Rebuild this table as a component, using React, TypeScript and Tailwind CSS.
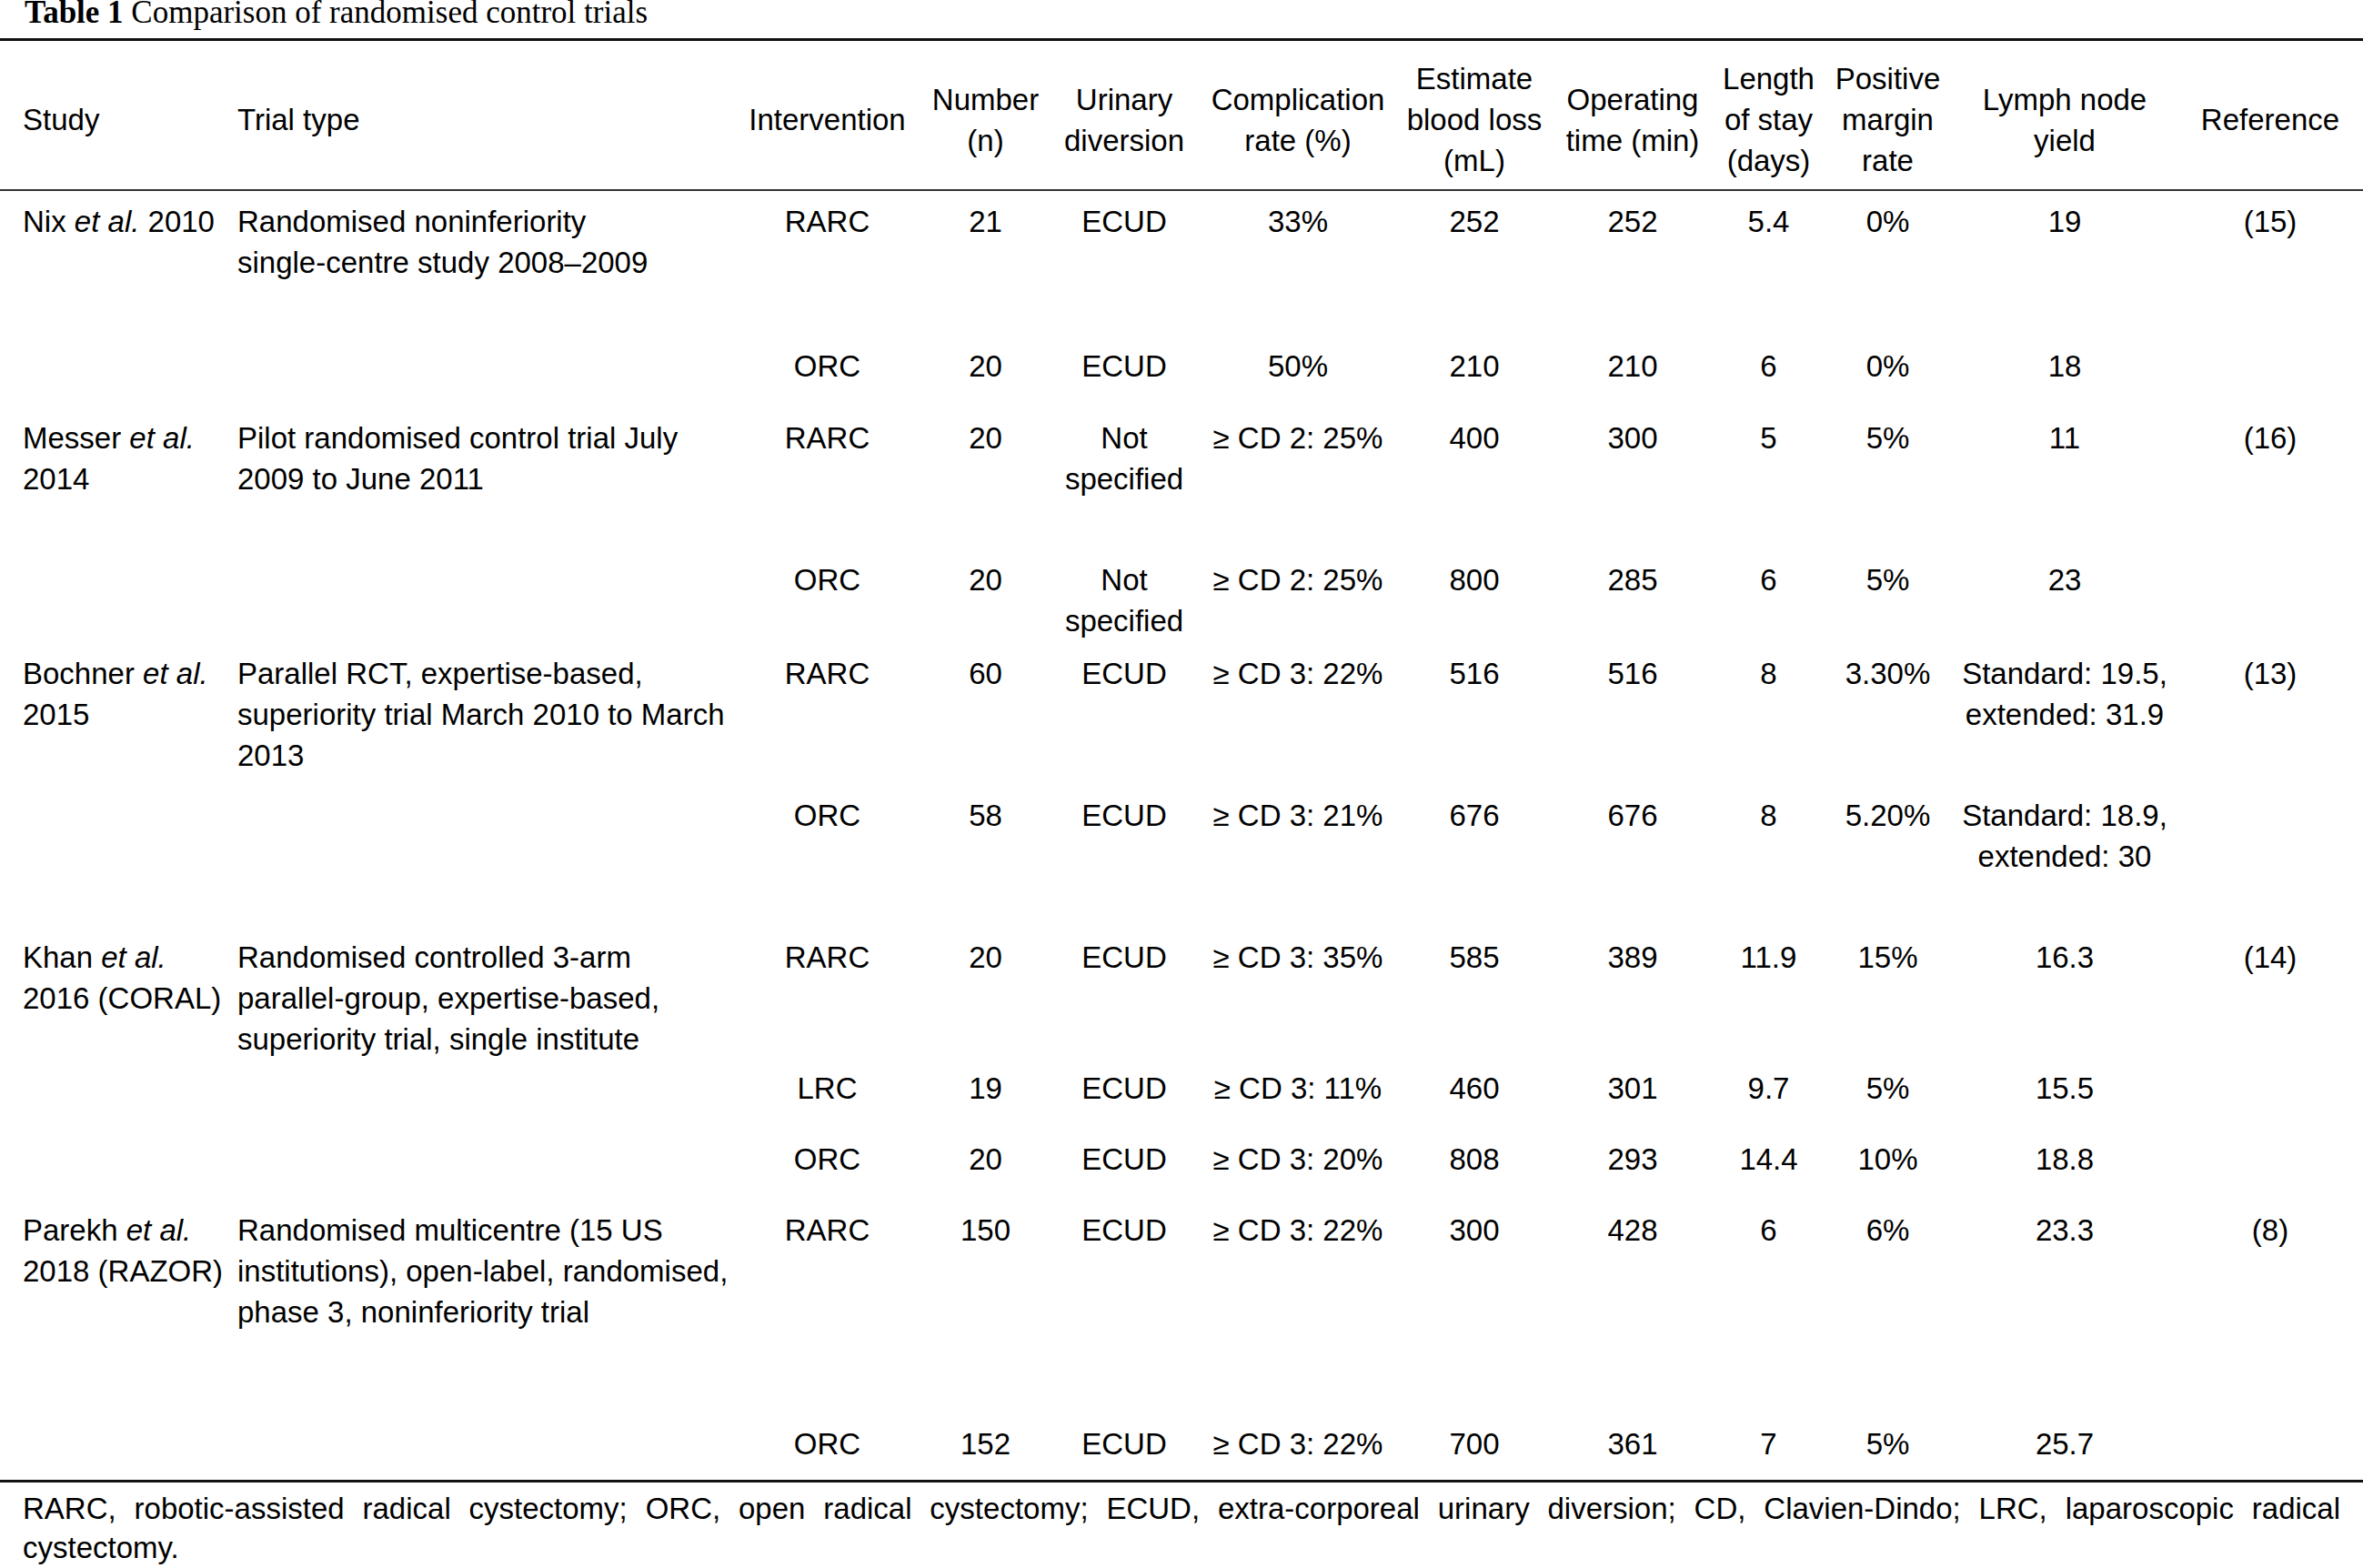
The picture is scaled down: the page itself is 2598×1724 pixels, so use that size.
import React from "react";

type Row = {
  h: string;
  cells: React.ReactNode[];
};

const COLS =
  "grid grid-cols-[259px_547px_207px_141px_164px_218px_170px_178px_121px_141px_248px_204px]";

const EA = <i>et al.</i>;

const rows: Row[] = [
  {
    h: "h-[159px]",
    cells: [
      <>Nix {EA} 2010</>,
      <>Randomised noninferiority<br />single-centre study 2008–2009</>,
      "RARC", "21", "ECUD", "33%", "252", "252", "5.4", "0%", "19", "(15)",
    ],
  },
  {
    h: "h-[79px]",
    cells: ["", "", "ORC", "20", "ECUD", "50%", "210", "210", "6", "0%", "18", ""],
  },
  {
    h: "h-[156px]",
    cells: [
      <>Messer {EA}<br />2014</>,
      <>Pilot randomised control trial July<br />2009 to June 2011</>,
      "RARC", "20", <>Not<br />specified</>, "≥ CD 2: 25%", "400", "300", "5", "5%", "11", "(16)",
    ],
  },
  {
    h: "h-[103px]",
    cells: ["", "", "ORC", "20", <>Not<br />specified</>, "≥ CD 2: 25%", "800", "285", "6", "5%", "23", ""],
  },
  {
    h: "h-[156px]",
    cells: [
      <>Bochner {EA}<br />2015</>,
      <>Parallel RCT, expertise-based,<br />superiority trial March 2010 to March<br />2013</>,
      "RARC", "60", "ECUD", "≥ CD 3: 22%", "516", "516", "8", "3.30%",
      <>Standard: 19.5,<br />extended: 31.9</>, "(13)",
    ],
  },
  {
    h: "h-[156px]",
    cells: [
      "", "", "ORC", "58", "ECUD", "≥ CD 3: 21%", "676", "676", "8", "5.20%",
      <>Standard: 18.9,<br />extended: 30</>, "",
    ],
  },
  {
    h: "h-[144px]",
    cells: [
      <>Khan {EA}<br />2016 (CORAL)</>,
      <>Randomised controlled 3-arm<br />parallel-group, expertise-based,<br />superiority trial, single institute</>,
      "RARC", "20", "ECUD", "≥ CD 3: 35%", "585", "389", "11.9", "15%", "16.3", "(14)",
    ],
  },
  {
    h: "h-[78px]",
    cells: ["", "", "LRC", "19", "ECUD", "≥ CD 3: 11%", "460", "301", "9.7", "5%", "15.5", ""],
  },
  {
    h: "h-[78px]",
    cells: ["", "", "ORC", "20", "ECUD", "≥ CD 3: 20%", "808", "293", "14.4", "10%", "18.8", ""],
  },
  {
    h: "h-[235px]",
    cells: [
      <>Parekh {EA}<br />2018 (RAZOR)</>,
      <>Randomised multicentre (15 US<br />institutions), open-label, randomised,<br />phase 3, noninferiority trial</>,
      "RARC", "150", "ECUD", "≥ CD 3: 22%", "300", "428", "6", "6%", "23.3", "(8)",
    ],
  },
  {
    h: "h-[73px]",
    cells: ["", "", "ORC", "152", "ECUD", "≥ CD 3: 22%", "700", "361", "7", "5%", "25.7", ""],
  },
];

const headers: React.ReactNode[] = [
  "Study",
  "Trial type",
  "Intervention",
  <>Number<br />(n)</>,
  <>Urinary<br />diversion</>,
  <>Complication<br />rate (%)</>,
  <>Estimate<br />blood loss<br />(mL)</>,
  <>Operating<br />time (min)</>,
  <>Length<br />of stay<br />(days)</>,
  <>Positive<br />margin<br />rate</>,
  <>Lymph node<br />yield</>,
  "Reference",
];

function cellClass(i: number) {
  if (i === 0) return "pl-[25px] text-left whitespace-nowrap";
  if (i === 1) return "pl-[2px] text-left whitespace-nowrap";
  return "text-center whitespace-nowrap";
}

export default function App() {
  return (
    <div className="w-[2598px] h-[1724px] overflow-hidden bg-white text-black font-['Liberation_Sans',Arial,sans-serif]">
      <div className="h-[42px] pl-[27px] font-['Liberation_Serif','Times_New_Roman',serif] text-[35px] leading-[28px] whitespace-nowrap">
        <b>Table 1</b> Comparison of randomised control trials
      </div>
      <div className="h-[3px] bg-[#111]" />
      <div className={`${COLS} h-[163px] pt-[10px] items-center text-[33px] leading-[45px]`}>
        {headers.map((h, i) => (
          <div key={i} className={cellClass(i)}>
            {h}
          </div>
        ))}
      </div>
      <div className="h-[2px] bg-[#333]" />
      {rows.map((r, ri) => (
        <div
          key={ri}
          className={`${COLS} ${r.h} pt-[11px] items-start text-[33px] leading-[45px]`}
        >
          {r.cells.map((c, i) => (
            <div key={i} className={cellClass(i)}>
              {c}
            </div>
          ))}
        </div>
      ))}
      <div className="h-[3px] bg-[#111]" />
      <div className="px-[25px] pt-[7px] text-[33px] leading-[43px]">
        <div className="text-justify [text-align-last:justify] whitespace-nowrap-none">
          RARC, robotic-assisted radical cystectomy; ORC, open radical cystectomy; ECUD, extra-corporeal urinary diversion; CD, Clavien-Dindo; LRC, laparoscopic radical
        </div>
        <div>cystectomy.</div>
      </div>
    </div>
  );
}
